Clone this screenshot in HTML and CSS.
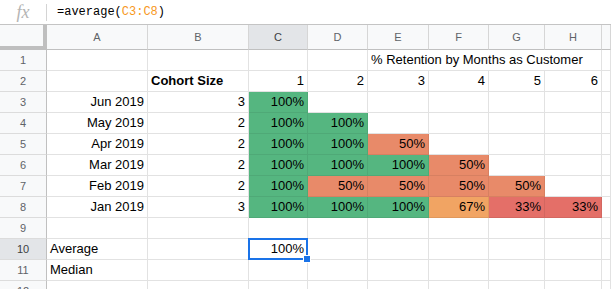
FILE: index.html
```html
<!DOCTYPE html>
<html lang="en">
<head>
    <meta charset="UTF-8">
    <title>Cohort Retention</title>
    <link rel="stylesheet" href="styles.css">
</head>
<body>
    <!-- Formula bar -->
    <div class="formula-bar">
        <span class="fx">fx</span>
        <span class="fx-sep"></span>
        <span class="formula">=average(<span class="ref">C3:C8</span>)</span>
    </div>

    <!-- Sheet grid -->
    <div class="sheet">
        <!-- column headers -->
        <div class="corner"></div>
        <div class="ch">A</div>
        <div class="ch">B</div>
        <div class="ch active">C</div>
        <div class="ch">D</div>
        <div class="ch">E</div>
        <div class="ch">F</div>
        <div class="ch">G</div>
        <div class="ch">H</div>
        <div class="ch"></div>

        <!-- row 1 -->
        <div class="rh">1</div>
        <div class="c"></div><div class="c"></div><div class="c"></div><div class="c"></div>
        <div class="c title">% Retention by Months as Customer</div>
        <div class="c"></div>

        <!-- row 2 -->
        <div class="rh">2</div>
        <div class="c"></div>
        <div class="c bold">Cohort Size</div>
        <div class="c num">1</div><div class="c num">2</div><div class="c num">3</div>
        <div class="c num">4</div><div class="c num">5</div><div class="c num">6</div>
        <div class="c"></div>

        <!-- row 3 -->
        <div class="rh">3</div>
        <div class="c num">Jun 2019</div><div class="c num">3</div>
        <div class="c num g">100%</div>
        <div class="c"></div><div class="c"></div><div class="c"></div><div class="c"></div><div class="c"></div>
        <div class="c"></div>

        <!-- row 4 -->
        <div class="rh">4</div>
        <div class="c num">May 2019</div><div class="c num">2</div>
        <div class="c num g">100%</div><div class="c num g">100%</div>
        <div class="c"></div><div class="c"></div><div class="c"></div><div class="c"></div>
        <div class="c"></div>

        <!-- row 5 -->
        <div class="rh">5</div>
        <div class="c num">Apr 2019</div><div class="c num">2</div>
        <div class="c num g">100%</div><div class="c num g">100%</div><div class="c num o">50%</div>
        <div class="c"></div><div class="c"></div><div class="c"></div>
        <div class="c"></div>

        <!-- row 6 -->
        <div class="rh">6</div>
        <div class="c num">Mar 2019</div><div class="c num">2</div>
        <div class="c num g">100%</div><div class="c num g">100%</div><div class="c num g">100%</div>
        <div class="c num o">50%</div>
        <div class="c"></div><div class="c"></div>
        <div class="c"></div>

        <!-- row 7 -->
        <div class="rh">7</div>
        <div class="c num">Feb 2019</div><div class="c num">2</div>
        <div class="c num g">100%</div><div class="c num o">50%</div><div class="c num o">50%</div>
        <div class="c num o">50%</div><div class="c num o">50%</div>
        <div class="c"></div>
        <div class="c"></div>

        <!-- row 8 -->
        <div class="rh">8</div>
        <div class="c num">Jan 2019</div><div class="c num">3</div>
        <div class="c num g">100%</div><div class="c num g">100%</div><div class="c num g">100%</div>
        <div class="c num y">67%</div><div class="c num r">33%</div><div class="c num r">33%</div>
        <div class="c"></div>

        <!-- row 9 -->
        <div class="rh">9</div>
        <div class="c"></div><div class="c"></div><div class="c"></div><div class="c"></div>
        <div class="c"></div><div class="c"></div><div class="c"></div><div class="c"></div>
        <div class="c"></div>

        <!-- row 10 -->
        <div class="rh active">10</div>
        <div class="c">Average</div><div class="c"></div>
        <div class="c num selected">100%</div>
        <div class="c"></div><div class="c"></div><div class="c"></div><div class="c"></div><div class="c"></div>
        <div class="c"></div>

        <!-- row 11 -->
        <div class="rh">11</div>
        <div class="c">Median</div><div class="c"></div><div class="c"></div><div class="c"></div>
        <div class="c"></div><div class="c"></div><div class="c"></div><div class="c"></div>
        <div class="c"></div>

        <!-- row 12 -->
        <div class="rh">12</div>
        <div class="c"></div><div class="c"></div><div class="c"></div><div class="c"></div>
        <div class="c"></div><div class="c"></div><div class="c"></div><div class="c"></div>
        <div class="c"></div>
    </div>
</body>
</html>
```

FILE: styles.css
```css
/* Reset */
* {
    margin: 0;
    padding: 0;
    box-sizing: border-box;
}

body {
    width: 611px;
    height: 289px;
    overflow: hidden;
    background: #ffffff;
    font-family: "Liberation Sans", Arial, sans-serif;
    font-size: 13px;
    color: #000000;
}

/* Formula bar */
.formula-bar {
    height: 25px;
    display: flex;
    align-items: center;
    border-bottom: 1px solid #c4c4c4;
}

.fx {
    width: 46px;
    text-align: center;
    font-family: "Liberation Serif", serif;
    font-style: italic;
    font-size: 18px;
    color: #b4b4b4;
}

.fx-sep {
    width: 1px;
    height: 17px;
    background-color: #d4d4d4;
}

.formula {
    padding-left: 10px;
    font-family: "Liberation Mono", monospace;
    font-size: 12px;
}

.formula .ref {
    color: #f7981d;
}

/* Grid */
.sheet {
    display: grid;
    grid-template-columns: 47px 101px 101px 59px 60px 61px 60px 56px 57px 1fr;
    grid-template-rows: 25px repeat(12, 21px);
}

.corner {
    background-color: #f8f9fa;
    border-right: 4px solid #bfbfbf;
    border-bottom: 4px solid #bfbfbf;
}

.ch {
    background-color: #f8f9fa;
    border-right: 1px solid #d6d6d6;
    border-bottom: 1px solid #c0c0c0;
    color: #5f6368;
    font-size: 11px;
    line-height: 24px;
    text-align: center;
}

.rh {
    background-color: #f8f9fa;
    border-right: 1px solid #c0c0c0;
    border-bottom: 1px solid #dcdcdc;
    color: #5f6368;
    font-size: 11px;
    line-height: 20px;
    text-align: center;
}

.ch.active,
.rh.active {
    background-color: #e3e5e8;
    color: #3c4043;
}

.c {
    border-right: 1px solid #e2e2e2;
    border-bottom: 1px solid #e2e2e2;
    padding: 0 3px;
    line-height: 20px;
    white-space: nowrap;
}

.num {
    text-align: right;
}

.bold {
    font-weight: bold;
}

.title {
    grid-column: span 4;
}

/* Conditional colour scale */
.g, .o, .y, .r {
    border-color: rgba(0, 0, 0, 0.07);
}

.g { background-color: #55b680; }
.o { background-color: #e88a69; }
.y { background-color: #f1a463; }
.r { background-color: #e46f68; }

/* Active cell */
.selected {
    position: relative;
}

.selected::before {
    content: "";
    position: absolute;
    top: -1px;
    left: -1px;
    right: -1px;
    bottom: -1px;
    border: 2px solid #1a73e8;
}

.selected::after {
    content: "";
    position: absolute;
    right: -4px;
    bottom: -4px;
    width: 6px;
    height: 6px;
    background-color: #1a73e8;
    border: 1px solid #ffffff;
}
```
